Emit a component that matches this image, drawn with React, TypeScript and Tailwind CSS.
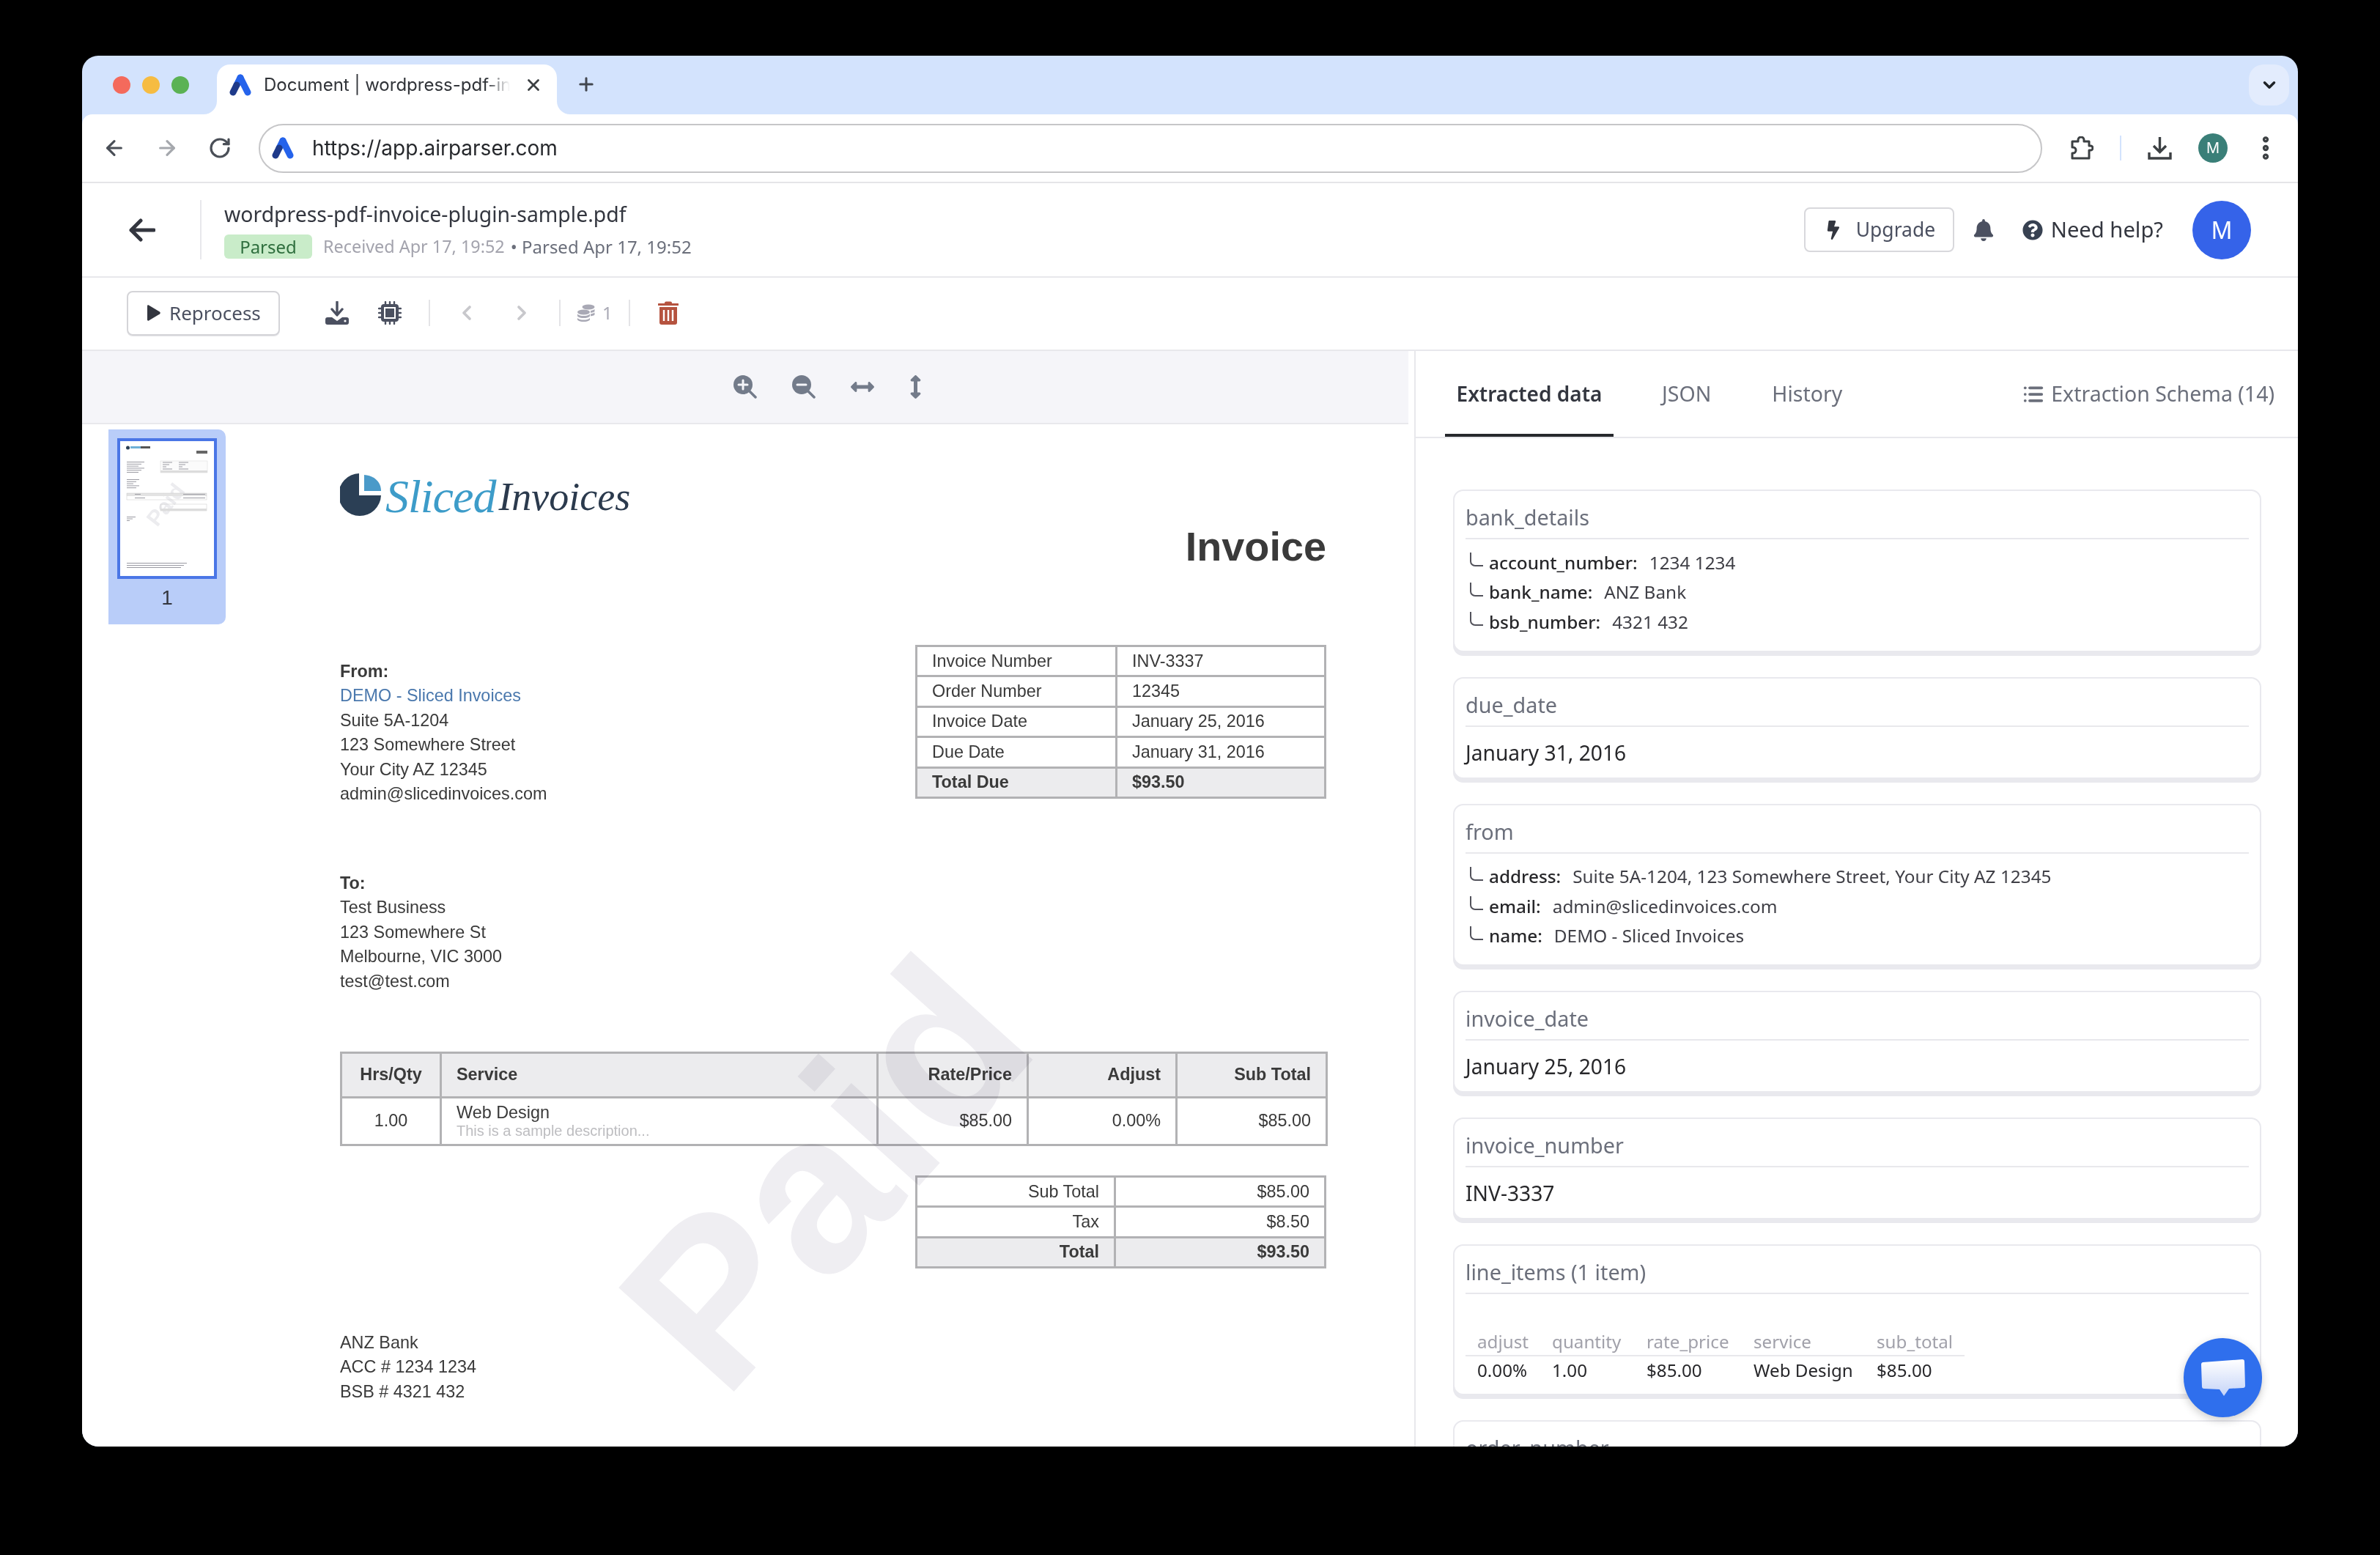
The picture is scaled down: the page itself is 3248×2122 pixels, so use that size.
import { FaArrowsAltH, FaArrowsAltV, FaBell, FaBolt, FaQuestionCircle } from "react-icons/fa";
import { ChevronDown, ChevronLeft, ChevronRight, List, Plus, RotateCw, ArrowLeft, ArrowRight, X, EllipsisVertical } from "lucide-react";
import type { ReactNode } from "react";

function AirparserLogo({ className }: { className: string }) {
  return (
    <svg className={className} viewBox="0 0 32 30" fill="none">
      <path d="M16 5 L26 25" stroke="#2563eb" strokeWidth="9" strokeLinecap="round" />
      <path d="M16 5 L11 15" stroke="#2563eb" strokeWidth="9" strokeLinecap="round" />
      <path d="M11 15 L6 25" stroke="#1e3a8a" strokeWidth="9" strokeLinecap="round" />
    </svg>
  );
}

function PuzzleIcon() {
  return (
    <svg className="h-[32px] w-[31px]" viewBox="0 0 31 32" fill="none" stroke="#3c4043" strokeWidth="3" strokeLinejoin="round">
      <path d="M2 7h8V5a4 4 0 0 1 8 0v2h7v6h2a3 3 0 0 1 0 6h-2v11H2v-7h1a4 4 0 0 0 0-8H2z" />
    </svg>
  );
}

function ChromeDownload() {
  return (
    <svg className="h-[32px] w-[33px]" viewBox="0 0 33 32" fill="none" stroke="#3c4043" strokeWidth="3.4">
      <path d="M16.5 1v20M8 13l8.5 8.5L25 13M2 22v8h29v-8" />
    </svg>
  );
}

function DownloadIcon() {
  return (
    <svg className="h-[32px] w-[32px]" viewBox="0 0 32 32" fill="#4b5060">
      <path d="M16 1v17M9 11l7 8 7-8" fill="none" stroke="#4b5060" strokeWidth="3.4" strokeLinecap="round" strokeLinejoin="round" />
      <path d="M3 22h6l7 5 7-5h6a3 3 0 0 1 3 3v4a3 3 0 0 1-3 3H3a3 3 0 0 1-3-3v-4a3 3 0 0 1 3-3z" />
      <circle cx="27" cy="27" r="1.6" fill="#fff" />
    </svg>
  );
}

function CpuIcon() {
  return (
    <svg className="h-[32px] w-[32px]" viewBox="0 0 32 32">
      <path d="M10 1v30M16 1v30M22 1v30M1 10h30M1 16h30M1 22h30" stroke="#4b5060" strokeWidth="2.4" strokeLinecap="round" />
      <rect x="4" y="4" width="24" height="24" rx="4" fill="#4b5060" />
      <rect x="8" y="8" width="16" height="16" fill="#fff" />
      <rect x="10" y="10" width="12" height="12" fill="#4b5060" />
    </svg>
  );
}

function CoinsIcon() {
  return (
    <svg className="h-[24px] w-[24px]" viewBox="0 0 24 24" fill="#a9a9b5">
      <ellipse cx="15" cy="4" rx="8.5" ry="3.4" />
      <path d="M18 9c2-.3 4-1 5.5-2v3c-1 .9-3 1.6-5.5 1.9zM18 13.5c2-.3 4-1 5.5-2v3c-1 .9-3 1.6-5.5 1.9z" />
      <ellipse cx="8.5" cy="11" rx="8.5" ry="3.4" />
      <path d="M0 13.5c2 2 5 2.6 8.5 2.6s6.500-.6 8.500-2.600v3c-2 2-5 2.600-8.500 2.600S2 18.500 0 16.500zM0 19c2 2 5 2.600 8.500 2.600S15 21 17 19v2.400C15 23.400 12 24 8.500 24S2 23.400 0 21.400z" />
    </svg>
  );
}

function TrashIcon() {
  return (
    <svg className="h-[32px] w-[28px]" viewBox="0 0 28 32" fill="#b5533f">
      <path d="M9 2.500a2 2 0 0 1 2-2h6a2 2 0 0 1 2 2V3h8a1 1 0 0 1 0 3H1a1 1 0 0 1 0-3h8z" />
      <path d="M2 8h24v21a3 3 0 0 1-3 3H5a3 3 0 0 1-3-3z" />
      <path d="M8 12v15M14 12v15M20 12v15" stroke="#fff" strokeWidth="2.400" />
    </svg>
  );
}

function ZoomIcon({ plus }: { plus?: boolean }) {
  return (
    <svg className="h-[32px] w-[32px]" viewBox="0 0 32 32">
      <path d="M21 21l9 9" stroke="#737b8a" strokeWidth="3.500" strokeLinecap="round" />
      <circle cx="13" cy="13" r="13" fill="#737b8a" />
      <path d={plus ? "M7 13h12M13 7v12" : "M7 13h12"} stroke="#f5f5f9" strokeWidth="3" strokeLinecap="round" />
    </svg>
  );
}

function TreeCorner() {
  return (
    <svg className="mt-[-8px] h-[20px] w-[18px] shrink-0" viewBox="0 0 18 20" fill="none" stroke="#52525b" strokeWidth="2">
      <path d="M1 0v12a6 6 0 0 0 6 6h11" />
    </svg>
  );
}

function Thumbnail() {
  const lines = (x: number, y: number, w: number, n: number, step: number) =>
    Array.from({ length: n }, (_, i) => <rect key={y + i} x={x} y={y + i * step} width={w - (i % 3) * 4} height="1" fill="#9a9aa2" />);
  return (
    <svg className="h-[192px] w-[136px] border-[4px] border-[#4a76e6] bg-white" viewBox="4 4 128 184">
      <text x="74" y="97" fontSize="30" fontWeight="700" fill="#ececef" textAnchor="middle" transform="rotate(-52 74 97)" fontFamily="Liberation Sans, sans-serif">
        Paid
      </text>
      <circle cx="14.500" cy="13" r="2.500" fill="#2b3f55" />
      <rect x="18" y="11" width="14" height="3" fill="#6fb0d6" />
      <rect x="32" y="11" width="13" height="3" fill="#555" />
      <rect x="108" y="17" width="15" height="4" fill="#666" />
      {lines(13, 32, 24, 6, 2.800)}
      {lines(13, 56, 17, 5, 2.800)}
      <rect x="59" y="31" width="64" height="16" fill="#fbfbfb" stroke="#d6d6d6" strokeWidth=".5" />
      {lines(62, 32.500, 13, 4, 3)}
      {lines(84, 32.500, 13, 4, 3)}
      <rect x="59" y="44" width="64" height="3" fill="#dcdcdc" />
      <rect x="13" y="75" width="109" height="4" fill="#e3e3e3" />
      <rect x="13" y="75" width="109" height="9" fill="none" stroke="#c8c8c8" strokeWidth=".5" />
      {lines(24, 76, 8, 1, 1)}
      {lines(90, 76, 30, 1, 1)}
      {lines(24, 81, 14, 1, 1)}
      {lines(90, 81, 30, 1, 1)}
      <rect x="59" y="90" width="63" height="9" fill="none" stroke="#c8c8c8" strokeWidth=".5" />
      <rect x="59" y="96" width="63" height="3" fill="#dcdcdc" />
      {lines(13, 107, 12, 3, 2.500)}
      {lines(13, 170, 82, 3, 3)}
    </svg>
  );
}

function SlicedLogo() {
  return (
    <div className="flex h-[60px] items-center">
      <svg className="h-[60px] w-[58px] shrink-0" viewBox="0 0 58 60">
        <path d="M26 1A29 29 0 1 0 56 31H26z" fill="#2b3f55" />
        <path d="M33 3v22h23C56 13 47 4 33 3z" fill="#4a9ac9" />
      </svg>
      <span className="ml-[4px] pt-[6px] font-['Liberation_Serif',serif] text-[64px] italic leading-none tracking-[-1px] text-[#3d9cc9]">Sliced</span>
      <span className="ml-[4px] pt-[6px] font-['Liberation_Serif',serif] text-[54px] italic leading-none text-[#2b3a4d]">Invoices</span>
    </div>
  );
}

function PdfLines({ rows }: { rows: ReactNode[] }) {
  return (
    <div className="font-['Liberation_Sans',sans-serif] text-[23.400px] leading-[33.400px] text-[#3a3a3a]">
      {rows.map((r, i) => (
        <div key={i}>{r}</div>
      ))}
    </div>
  );
}

const pdfCell = "border-[3px] border-[#b2b2b4] px-[20px]";

function MetaTable() {
  const rows = [
    ["Invoice Number", "INV-3337"],
    ["Order Number", "12345"],
    ["Invoice Date", "January 25, 2016"],
    ["Due Date", "January 31, 2016"],
  ];
  return (
    <table className="h-[210px] w-[561px] table-fixed border-collapse text-[23.400px] text-[#3a3a3a]">
      <tbody>
        {rows.map(([a, b]) => (
          <tr key={a}>
            <td className={`${pdfCell} w-[273px]`}>{a}</td>
            <td className={pdfCell}>{b}</td>
          </tr>
        ))}
        <tr className="bg-[#ececee] font-bold">
          <td className={pdfCell}>Total Due</td>
          <td className={pdfCell}>$93.50</td>
        </tr>
      </tbody>
    </table>
  );
}

function ItemsTable() {
  return (
    <table className="h-[129px] w-[1345px] table-fixed border-collapse text-[23.400px] text-[#3a3a3a]">
      <thead>
        <tr className="h-[61px] bg-[#ececee] font-bold">
          <th className={`${pdfCell} w-[136px] text-center`}>Hrs/Qty</th>
          <th className={`${pdfCell} w-[596px] text-left`}>Service</th>
          <th className={`${pdfCell} w-[205px] text-right`}>Rate/Price</th>
          <th className={`${pdfCell} w-[203px] text-right`}>Adjust</th>
          <th className={`${pdfCell} w-[205px] text-right`}>Sub Total</th>
        </tr>
      </thead>
      <tbody>
        <tr>
          <td className={`${pdfCell} text-center`}>1.00</td>
          <td className={pdfCell}>
            <div className="leading-[26px]">Web Design</div>
            <div className="text-[20px] leading-[24px] text-[#bdbdc0]">This is a sample description...</div>
          </td>
          <td className={`${pdfCell} text-right`}>$85.00</td>
          <td className={`${pdfCell} text-right`}>0.00%</td>
          <td className={`${pdfCell} text-right`}>$85.00</td>
        </tr>
      </tbody>
    </table>
  );
}

function TotalsTable() {
  return (
    <table className="h-[127px] w-[561px] table-fixed border-collapse self-end text-[23.400px] text-[#3a3a3a]">
      <tbody>
        <tr>
          <td className={`${pdfCell} w-[271px] text-right`}>Sub Total</td>
          <td className={`${pdfCell} text-right`}>$85.00</td>
        </tr>
        <tr>
          <td className={`${pdfCell} text-right`}>Tax</td>
          <td className={`${pdfCell} text-right`}>$8.50</td>
        </tr>
        <tr className="bg-[#ececee] font-bold">
          <td className={`${pdfCell} text-right`}>Total</td>
          <td className={`${pdfCell} text-right`}>$93.50</td>
        </tr>
      </tbody>
    </table>
  );
}

function Card({ title, children, className = "" }: { title: string; children: ReactNode; className?: string }) {
  return (
    <section className={`shrink-0 rounded-[14px] border-2 border-[#e9e9ee] bg-white px-[15px] pt-[17px] shadow-[0_5px_0_#e9e9ee] ${className}`}>
      <h3 className="border-b-2 border-[#e8e8ec] pb-[9px] text-[28.800px] leading-[38px] text-[#6b6f7b]">{title}</h3>
      {children}
    </section>
  );
}

function FieldRows({ rows }: { rows: [string, string][] }) {
  return (
    <div className="mt-[12px] pb-[18px]">
      {rows.map(([k, v]) => (
        <div key={k} className="flex h-[40.500px] items-center pl-[6px] text-[24.350px]">
          <TreeCorner />
          <span className="ml-[8px] font-medium text-[#27272a]">{k}:</span>
          <span className="ml-[16px] text-[#3f3f46]">{v}</span>
        </div>
      ))}
    </div>
  );
}

function ValueCard({ title, value }: { title: string; value: string }) {
  return (
    <Card title={title}>
      <div className="mt-[16px] pb-[15px] text-[28.200px] leading-[38px] text-[#27272a]">{value}</div>
    </Card>
  );
}

function LineItems() {
  const cell = "pl-[16px] text-left font-normal";
  return (
    <table className="mb-[14px] mt-[47px] w-[681px] table-fixed border-collapse text-[24.200px]">
      <thead>
        <tr className="h-[36px] border-b-2 border-[#e8e8ec] text-[#a1a1aa]">
          <th className={`${cell} w-[102px]`}>adjust</th>
          <th className={`${cell} w-[129px]`}>quantity</th>
          <th className={`${cell} w-[146px]`}>rate_price</th>
          <th className={`${cell} w-[168px]`}>service</th>
          <th className={cell}>sub_total</th>
        </tr>
      </thead>
      <tbody>
        <tr className="h-[38px] text-[#27272a]">
          <td className={cell}>0.00%</td>
          <td className={cell}>1.00</td>
          <td className={cell}>$85.00</td>
          <td className={cell}>Web Design</td>
          <td className={cell}>$85.00</td>
        </tr>
      </tbody>
    </table>
  );
}

export default function App() {
  return (
    <div className="h-[2122px] w-[3248px] overflow-hidden bg-black pl-[112px] pt-[76px] font-['Noto_Sans',sans-serif]">
      <div className="flex h-[1898px] w-[3024px] flex-col overflow-hidden rounded-[22px] bg-[#d3e3fd]">
        {/* tab strip */}
        <div className="flex h-[80px] shrink-0 items-end">
          <div className="ml-[42px] flex gap-[16px] self-center">
            <span className="h-[24px] w-[24px] rounded-full bg-[#f46a5c]" />
            <span className="h-[24px] w-[24px] rounded-full bg-[#f6bc42]" />
            <span className="h-[24px] w-[24px] rounded-full bg-[#5bb254]" />
          </div>
          <div className="relative ml-[38px] flex h-[68px] w-[464px] items-center rounded-t-[18px] bg-white pb-[12px] pl-[16px]">
            <svg className="absolute -left-[18px] bottom-0 h-[18px] w-[18px]" viewBox="0 0 18 18" fill="#fff">
              <path d="M18 0v18H0A18 18 0 0 0 18 0z" />
            </svg>
            <svg className="absolute -right-[18px] bottom-0 h-[18px] w-[18px]" viewBox="0 0 18 18" fill="#fff">
              <path d="M0 0v18h18A18 18 0 0 1 0 0z" />
            </svg>
            <AirparserLogo className="h-[30px] w-[32px] shrink-0" />
            <span className="ml-[16px] w-[336px] overflow-hidden whitespace-nowrap font-['Inter',sans-serif] text-[24px] text-[#303338] [mask-image:linear-gradient(90deg,#000_90%,transparent)]">
              Document | wordpress-pdf-invoice-plugin-sample.pdf
            </span>
            <X className="ml-[19px] h-[26px] w-[26px] shrink-0 text-[#3c4043]" strokeWidth={2.6} />
          </div>
          <Plus className="mb-[27px] ml-[26px] h-[28px] w-[28px] text-[#42474f]" strokeWidth={2.6} />
          <div className="ml-auto mr-[12px] flex h-[56px] w-[55px] items-center justify-center self-center rounded-[20px] bg-[#e3ecfd]">
            <ChevronDown className="h-[26px] w-[26px] text-[#1f2328]" strokeWidth={3.2} />
          </div>
        </div>

        {/* browser toolbar */}
        <div className="flex h-[94px] shrink-0 items-center rounded-t-[14px] border-b-2 border-[#e5e5e8] bg-white pl-[28px]">
          <ArrowLeft className="h-[32px] w-[32px] text-[#4a4f57]" strokeWidth={2.4} />
          <ArrowRight className="ml-[40px] h-[32px] w-[32px] text-[#a5a8ad]" strokeWidth={2.4} />
          <RotateCw className="ml-[40px] h-[32px] w-[32px] text-[#4a4f57]" strokeWidth={2.4} />
          <div className="ml-[37px] flex h-[67px] w-[2434px] items-center rounded-full border-2 border-[#c6c6c8] pl-[15px]">
            <AirparserLogo className="h-[30px] w-[32px] shrink-0" />
            <span className="ml-[24px] font-['Inter',sans-serif] text-[28px] text-[#26282c]">https://app.airparser.com</span>
          </div>
          <div className="ml-[39px]">
            <PuzzleIcon />
          </div>
          <span className="ml-[36px] h-[34px] w-[2px] bg-[#d3e3fd]" />
          <div className="ml-[36px]">
            <ChromeDownload />
          </div>
          <span className="ml-[36px] flex h-[40px] w-[40px] items-center justify-center rounded-full bg-[#3a7f78] font-['Inter',sans-serif] text-[20px] text-white">M</span>
          <EllipsisVertical className="ml-[32px] h-[40px] w-[40px] text-[#3c4043]" strokeWidth={3} />
        </div>

        {/* app header */}
        <div className="flex h-[129px] shrink-0 items-center border-b-2 border-[#e8e8ec] bg-white pl-[63px] pr-[64px]">
          <svg className="h-[32px] w-[37px]" viewBox="0 0 37 32" fill="none" stroke="#33363f" strokeWidth="5" strokeLinecap="round" strokeLinejoin="round">
            <path d="M35 16H4M17 3L4 16l13 13" />
          </svg>
          <span className="ml-[61px] h-[81px] w-[2px] bg-[#e8e8ec]" />
          <div className="ml-[31px] flex flex-col">
            <div className="text-[28.400px] leading-[38px] text-[#33363f]">wordpress-pdf-invoice-plugin-sample.pdf</div>
            <div className="mt-[8px] flex items-center">
              <span className="flex h-[33px] w-[120px] items-center justify-center rounded-[6px] bg-[#c9ecc9] text-[24px] text-[#2f6f3e]">Parsed</span>
              <span className="ml-[15px] text-[23.400px] text-[#a3a3ad]">Received Apr 17, 19:52</span>
              <span className="ml-[8px] text-[24px] text-[#6b6f7b]">• Parsed Apr 17, 19:52</span>
            </div>
          </div>
          <div className="ml-auto flex h-[61px] w-[205px] items-center rounded-[8px] border-2 border-[#d8d8dc] pl-[27px] text-[26.500px] text-[#4b5060]">
            <FaBolt className="h-[26px] w-[22px] text-[#33363f]" />
            <span className="ml-[20px]">Upgrade</span>
          </div>
          <FaBell className="ml-[26px] h-[30px] w-[28px] text-[#4b5060]" />
          <FaQuestionCircle className="ml-[39px] h-[28px] w-[28px] text-[#374151]" />
          <span className="ml-[11px] text-[29.200px] text-[#33363f]">Need help?</span>
          <span className="ml-[40px] flex h-[80px] w-[80px] items-center justify-center rounded-full bg-[#3563e9] text-[32px] text-white">M</span>
        </div>

        {/* document toolbar */}
        <div className="flex h-[100px] shrink-0 items-center border-b-2 border-[#e8e8ec] bg-white pb-[2px] pl-[61px]">
          <button className="flex h-[61px] w-[209px] items-center rounded-[8px] border-2 border-[#d4d4d8] pl-[26px] text-[26px] text-[#4b5060] shadow-[0_1px_0_#e4e4e7]">
            <svg className="h-[22px] w-[18px]" viewBox="0 0 18 22" fill="#33363f">
              <path d="M0 1.500C0 .500 1 0 2 .500l15 9c1 .6 1 2.400 0 3l-15 9c-1 .5-2 0-2-1z" />
            </svg>
            <span className="ml-[12px]">Reprocess</span>
          </button>
          <div className="ml-[62px]">
            <DownloadIcon />
          </div>
          <div className="ml-[40px]">
            <CpuIcon />
          </div>
          <span className="ml-[37px] h-[36px] w-[2px] bg-[#e4e4e7]" />
          <ChevronLeft className="ml-[34px] h-[32px] w-[32px] text-[#c8c8cc]" strokeWidth={2.8} />
          <ChevronRight className="ml-[43px] h-[32px] w-[32px] text-[#c8c8cc]" strokeWidth={2.8} />
          <span className="ml-[35px] h-[36px] w-[2px] bg-[#e4e4e7]" />
          <div className="ml-[23px]">
            <CoinsIcon />
          </div>
          <span className="ml-[10px] w-[36px] text-[24px] text-[#a9a9b5]">1</span>
          <span className="h-[36px] w-[2px] bg-[#e4e4e7]" />
          <div className="ml-[38px]">
            <TrashIcon />
          </div>
        </div>

        {/* body */}
        <div className="flex min-h-0 flex-1 bg-white">
          <div className="flex w-[1810px] shrink-0 flex-col">
            <div className="flex h-[100px] shrink-0 items-center gap-[48px] border-b-2 border-[#e8e8ec] bg-[#f5f5f9] pl-[889px]">
              <ZoomIcon plus />
              <ZoomIcon />
              <FaArrowsAltH className="h-[32px] w-[32px] text-[#737b8a]" />
              <FaArrowsAltV className="h-[32px] w-[17px] text-[#737b8a]" />
            </div>
            <div className="flex min-h-0 flex-1">
              <div className="w-[352px] shrink-0 pl-[36px] pt-[7px]">
                <div className="flex h-[266px] w-[160px] flex-col items-center rounded-r-[10px] bg-[#b9cdf9] pt-[12px]">
                  <Thumbnail />
                  <span className="mt-[5px] font-['Liberation_Sans',sans-serif] text-[28px] text-[#33363f]">1</span>
                </div>
              </div>
              <div className="relative flex w-[1346px] flex-col font-['Liberation_Sans',sans-serif]">
                <div className="mt-[66px]">
                  <SlicedLogo />
                </div>
                <div className="mt-[11px] h-[60px] text-right text-[55.800px] font-bold leading-[60px] text-[#3a3a3a]">Invoice</div>
                <div className="mt-[104px] flex h-[217px] justify-between">
                  <div className="pt-[20px]">
                    <PdfLines
                      rows={[
                        <b key="from">From:</b>,
                        <span key="demo" className="text-[#4a78ad]">DEMO - Sliced Invoices</span>,
                        "Suite 5A-1204",
                        "123 Somewhere Street",
                        "Your City AZ 12345",
                        "admin@slicedinvoices.com",
                      ]}
                    />
                  </div>
                  <MetaTable />
                </div>
                <div className="mt-[92px]">
                  <PdfLines rows={[<b key="to">To:</b>, "Test Business", "123 Somewhere St", "Melbourne, VIC 3000", "test@test.com"]} />
                </div>
                <div className="mt-[79px]">
                  <ItemsTable />
                </div>
                <div className="mt-[40px] flex flex-col">
                  <TotalsTable />
                </div>
                <div className="mt-[85px]">
                  <PdfLines rows={["ANZ Bank", "ACC # 1234 1234", "BSB # 4321 432"]} />
                </div>
                <div className="pointer-events-none absolute left-[662px] top-[1022px] -translate-x-1/2 -translate-y-1/2 -rotate-[48deg] whitespace-nowrap text-[308px] font-bold leading-none text-[#efeef2] mix-blend-multiply">
                  Paid
                </div>
              </div>
            </div>
          </div>

          {/* extracted data */}
          <div className="relative ml-[8px] flex min-w-0 flex-1 flex-col border-l-2 border-[#e8e8ec]">
            <div className="flex h-[119px] shrink-0 border-b-2 border-[#e8e8ec] pl-[40px] pr-[32px] text-[28.500px] text-[#6b6f7b]">
              <div className="flex w-[230px] items-center justify-center border-b-[4px] border-[#26282c] pt-[2px] text-[28px] font-semibold text-[#33363f]">Extracted data</div>
              <div className="ml-[66px] flex items-center">JSON</div>
              <div className="ml-[83px] flex items-center">History</div>
              <div className="ml-auto flex items-center">
                <List className="mr-[9px] h-[30px] w-[30px]" strokeWidth={3} />
                Extraction Schema (14)
              </div>
            </div>
            <div className="flex min-h-0 flex-1 flex-col gap-[34px] overflow-hidden pl-[51px] pr-[50px] pt-[70px]">
              <Card title="bank_details">
                <FieldRows
                  rows={[
                    ["account_number", "1234 1234"],
                    ["bank_name", "ANZ Bank"],
                    ["bsb_number", "4321 432"],
                  ]}
                />
              </Card>
              <ValueCard title="due_date" value="January 31, 2016" />
              <Card title="from">
                <FieldRows
                  rows={[
                    ["address", "Suite 5A-1204, 123 Somewhere Street, Your City AZ 12345"],
                    ["email", "admin@slicedinvoices.com"],
                    ["name", "DEMO - Sliced Invoices"],
                  ]}
                />
              </Card>
              <ValueCard title="invoice_date" value="January 25, 2016" />
              <ValueCard title="invoice_number" value="INV-3337" />
              <Card title="line_items (1 item)">
                <LineItems />
              </Card>
              <ValueCard title="order_number" value="12345" />
            </div>
            <div className="absolute bottom-[40px] right-[49px] flex h-[108px] w-[107px] items-center justify-center rounded-full bg-[#2f6fed] shadow-[0_4px_12px_rgba(0,0,0,0.2)]">
              <svg className="h-[52px] w-[62px]" viewBox="0 0 62 52">
                <defs>
                  <linearGradient id="chatFill" x1="0" y1="0" x2="0" y2="1">
                    <stop offset="0" stopColor="#ffffff" />
                    <stop offset="1" stopColor="#c5d4f8" />
                  </linearGradient>
                </defs>
                <path d="M3 5 L57 1 a3 3 0 0 1 3 3 L61 37 a3 3 0 0 1-3 3 L39 41 L32 51 L26 42 L5 41 a3 3 0 0 1-3-3 L1 8 a3 3 0 0 1 2-3z" fill="url(#chatFill)" />
              </svg>
            </div>
          </div>
        </div>
      </div>
    </div>
  );
}
